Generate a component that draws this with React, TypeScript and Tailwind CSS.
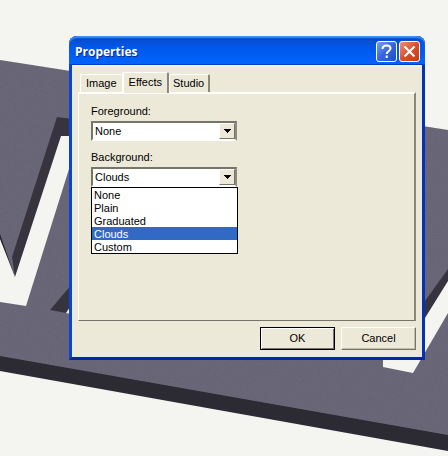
import React, { useState } from 'react';

const tabs = ['Image', 'Effects', 'Studio'];
const fills = ['None', 'Plain', 'Graduated', 'Clouds', 'Custom'];

function Scene() {
  return (
    <svg
      className="absolute inset-0 h-full w-full"
      viewBox="0 0 448 456"
      preserveAspectRatio="xMinYMin slice"
      aria-hidden="true"
    >
      <defs>
        <filter id="grain" x="0" y="0" width="100%" height="100%">
          <feTurbulence type="fractalNoise" baseFrequency="0.6" numOctaves="2" seed="4" />
          <feColorMatrix values="0 0 0 0 0.1  0 0 0 0 0.1  0 0 0 0 0.15  0.6 0 0 0 -0.2" />
          <feComposite in2="SourceGraphic" operator="in" result="noise" />
          <feMerge>
            <feMergeNode in="SourceGraphic" />
            <feMergeNode in="noise" />
          </feMerge>
        </filter>
      </defs>
      {/* slab */}
      <path d="M0 355 448 434V451L0 371Z" fill="#2c2a33" />
      <path d="M0 60 448 130V435L0 356Z" fill="#6b6878" filter="url(#grain)" />
      {/* left letter */}
      <path d="M57 117 80 120V140H61L15 277 12 257Z" fill="#37343f" />
      <path d="M0 234 15 277 14 279 0 240Z" fill="#24222a" />
      <path d="M0 239 15 277 61 136H80V134L26 306 0 302Z" fill="#f4f4f0" />
      {/* second letter */}
      <path d="M72 284 50 310 66 313 74 304Z" fill="#37343f" />
      <path d="M66 313 72 304V314Z" fill="#f4f4f0" />
      {/* right letter */}
      <path d="M448 269 420 308V326L448 282Z" fill="#37343f" />
      <path d="M448 281 425 318 383 350 383 367 413 373 448 313Z" fill="#f4f4f0" />
    </svg>
  );
}

function ComboBox({ id, label, value, onChange, open, onToggle }: {
  id: string;
  label: string;
  value: string;
  onChange: (v: string) => void;
  open: boolean;
  onToggle: () => void;
}) {
  return (
    <div className="relative w-[146px]">
      <label htmlFor={id} className="block h-4 leading-4">{label}</label>
      <div className="relative mt-0.5">
        <select
          id={id}
          value={value}
          onMouseDown={(e) => { e.preventDefault(); onToggle(); }}
          onChange={(e) => onChange(e.target.value)}
          className="block h-5 w-full appearance-none border-2 border-t-[#77756a] border-r-[#8d8a7e] border-b-white border-l-[#77756a] bg-white pl-0.5 outline-none"
        >
          {fills.map((f) => <option key={f}>{f}</option>)}
        </select>
        <span className="pointer-events-none absolute top-0.5 right-0.5 flex h-4 w-4 items-center justify-center border border-t-white border-r-[#77756a] border-b-[#77756a] border-l-white bg-[#ece9d8]">
          <svg width="7" height="4" viewBox="0 0 7 4" shapeRendering="crispEdges">
            <path d="M0 0H7V1H0ZM1 1H6V2H1ZM2 2H5V3H2ZM3 3H4V4H3Z" fill="#000" />
          </svg>
        </span>
      </div>
      {open && (
        <ul role="listbox" aria-label={label} className="absolute top-full left-0 w-[147px] border border-black bg-white">
          {fills.map((f) => (
            <li
              key={f}
              role="option"
              aria-selected={f === value}
              onClick={() => { onChange(f); onToggle(); }}
              className={f === value ? 'h-[13px] bg-[#316ac5] pl-0.5 leading-[14px] text-white' : 'h-[13px] pl-0.5 leading-[14px]'}
            >
              {f}
            </li>
          ))}
        </ul>
      )}
    </div>
  );
}

export default function App() {
  const [tab, setTab] = useState('Effects');
  const [foreground, setForeground] = useState('None');
  const [background, setBackground] = useState('Clouds');
  const [open, setOpen] = useState('background');

  const toggle = (name: string) => setOpen(open === name ? '' : name);

  return (
    <main className="relative min-h-screen overflow-hidden bg-[#f4f4f0] pt-9 pr-[23px] pl-[69px] font-['Liberation_Sans',Arial,sans-serif] text-[11px] text-black">
      <Scene />
      <section
        role="dialog"
        aria-labelledby="title"
        className="relative rounded-t-lg border-x-3 border-b-3 border-r-[#0831b0] border-b-[#0528a0] border-l-[#0b44d0] bg-[#0a50e0]"
      >
        <header className="-mx-[3px] flex h-[29px] items-center gap-0.5 rounded-t-lg bg-linear-to-b from-[#0a48c4] via-[#0058ec] via-40% to-[#0064fc] pt-0.5 pr-[5px] pl-1.5 shadow-[inset_0_2px_1px_#3a8cf8,inset_0_-1px_0_#0040c0]">
          <h1 id="title" className="flex-1 font-['Open_Sans',sans-serif] text-[12px] font-bold text-white [text-shadow:1px_1px_#0a2a80]">
            Properties
          </h1>
          <button
            aria-label="Help"
            className="flex h-[21px] w-[21px] items-center justify-center rounded-[3px] border border-white bg-linear-to-br from-[#7a9cf0] via-[#3566e0] to-[#1c4cd0]"
          >
            <svg width="13" height="15" viewBox="0 0 13 15" fill="none" stroke="#fff" strokeWidth="2">
              <path d="M2.5 5C2.5 2.5 4 1.5 6.5 1.5S10.5 2.8 10.5 4.6C10.5 7 6.7 7 6.7 10" />
              <path d="M6.7 11.5V14" />
            </svg>
          </button>
          <button
            aria-label="Close"
            className="flex h-[21px] w-[21px] items-center justify-center rounded-[3px] border border-white bg-linear-to-br from-[#ec9076] via-[#dc4c28] to-[#c43c14]"
          >
            <svg width="13" height="13" viewBox="0 0 13 13" stroke="#fff" strokeWidth="2.2">
              <path d="M1.5 1.5 11.5 11.5M11.5 1.5 1.5 11.5" />
            </svg>
          </button>
        </header>

        <div className="border-2 border-t-[#f2f1ea] border-r-[#e6e8e4] border-b-[#e2e9f2] border-l-[#e4ecf2] bg-[#ece9d8] px-1 pt-[5px] pb-[5px]">
          <div role="tablist" className="flex h-5 items-end pl-0.5">
            {tabs.map((t) => (
              <button
                key={t}
                role="tab"
                aria-selected={t === tab}
                onClick={() => setTab(t)}
                className={
                  t === tab
                    ? 'relative z-10 -mb-px h-[21px] rounded-t-xs border-t border-r-2 border-l-2 border-t-white border-r-[#8a877a] border-l-white bg-[#ece9d8] px-[5px] pb-0.5'
                    : 'h-[18px] rounded-t-xs border-t border-r-2 border-l border-t-white border-r-[#8a877a] border-l-white pr-1 pl-[3px] first:border-r-0 first:px-[5px]'
                }
              >
                {t}
              </button>
            ))}
          </div>

          <div role="tabpanel" className="min-h-[229px] border border-t-2 border-r-2 border-t-white border-r-[#8a877a] border-b-[#77756a] border-l-white px-3 pt-[9px]">
            <ComboBox
              id="foreground"
              label="Foreground:"
              value={foreground}
              onChange={setForeground}
              open={open === 'foreground'}
              onToggle={() => toggle('foreground')}
            />
            <div className="mt-2">
              <ComboBox
                id="background"
                label="Background:"
                value={background}
                onChange={setBackground}
                open={open === 'background'}
                onToggle={() => toggle('background')}
              />
            </div>
          </div>

          <div className="mt-1.5 flex justify-end gap-1.5">
            <button className="h-[23px] w-[75px] border border-black bg-[#ece9d8] shadow-[inset_1px_1px_#fff,inset_-1px_-1px_#77756a]">
              OK
            </button>
            <button className="h-[23px] w-[75px] border border-t-white border-r-[#77756a] border-b-[#77756a] border-l-white bg-[#ece9d8] shadow-[inset_-1px_-1px_#c0bda8]">
              Cancel
            </button>
          </div>
        </div>
      </section>
    </main>
  );
}
